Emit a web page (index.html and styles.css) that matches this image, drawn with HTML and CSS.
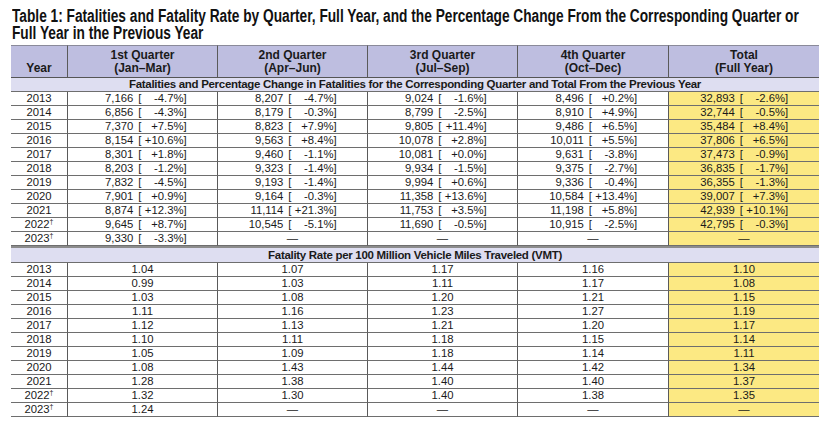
FILE: index.html
```html
<!DOCTYPE html>
<html lang="en">
<head>
<meta charset="utf-8">
<title>Table 1: Fatalities and Fatality Rate</title>
<link rel="stylesheet" href="styles.css">
</head>
<body>
<div class="page">
  <h1 class="title"><span class="title-text">Table 1: Fatalities and Fatality Rate by Quarter, Full Year, and the Percentage Change From the Corresponding Quarter or<br>Full Year in the Previous Year</span></h1>
  <table class="tbl">
    <colgroup>
      <col class="c-year"><col class="c-q"><col class="c-q"><col class="c-q"><col class="c-q4"><col class="c-q">
    </colgroup>
    <thead>
      <tr class="head">
        <th class="year-h"><br>Year</th>
        <th>1st Quarter<br>(Jan–Mar)</th>
        <th>2nd Quarter<br>(Apr–Jun)</th>
        <th>3rd Quarter<br>(Jul–Sep)</th>
        <th>4th Quarter<br>(Oct–Dec)</th>
        <th class="last">Total<br>(Full Year)</th>
      </tr>
    </thead>
    <tbody>
      <tr class="section"><td colspan="6">Fatalities and Percentage Change in Fatalities for the Corresponding Quarter and Total From the Previous Year</td></tr>
      <tr><td>2013</td><td><span class="n">7,166</span><span class="p">[<i>-4.7%</i>]</span></td><td><span class="n">8,207</span><span class="p">[<i>-4.7%</i>]</span></td><td><span class="n">9,024</span><span class="p">[<i>-1.6%</i>]</span></td><td><span class="n">8,496</span><span class="p">[<i>+0.2%</i>]</span></td><td class="tot"><span class="n">32,893</span><span class="p">[<i>-2.6%</i>]</span></td></tr>
      <tr><td>2014</td><td><span class="n">6,856</span><span class="p">[<i>-4.3%</i>]</span></td><td><span class="n">8,179</span><span class="p">[<i>-0.3%</i>]</span></td><td><span class="n">8,799</span><span class="p">[<i>-2.5%</i>]</span></td><td><span class="n">8,910</span><span class="p">[<i>+4.9%</i>]</span></td><td class="tot"><span class="n">32,744</span><span class="p">[<i>-0.5%</i>]</span></td></tr>
      <tr><td>2015</td><td><span class="n">7,370</span><span class="p">[<i>+7.5%</i>]</span></td><td><span class="n">8,823</span><span class="p">[<i>+7.9%</i>]</span></td><td><span class="n">9,805</span><span class="p">[<i>+11.4%</i>]</span></td><td><span class="n">9,486</span><span class="p">[<i>+6.5%</i>]</span></td><td class="tot"><span class="n">35,484</span><span class="p">[<i>+8.4%</i>]</span></td></tr>
      <tr><td>2016</td><td><span class="n">8,154</span><span class="p">[<i>+10.6%</i>]</span></td><td><span class="n">9,563</span><span class="p">[<i>+8.4%</i>]</span></td><td><span class="n">10,078</span><span class="p">[<i>+2.8%</i>]</span></td><td><span class="n">10,011</span><span class="p">[<i>+5.5%</i>]</span></td><td class="tot"><span class="n">37,806</span><span class="p">[<i>+6.5%</i>]</span></td></tr>
      <tr><td>2017</td><td><span class="n">8,301</span><span class="p">[<i>+1.8%</i>]</span></td><td><span class="n">9,460</span><span class="p">[<i>-1.1%</i>]</span></td><td><span class="n">10,081</span><span class="p">[<i>+0.0%</i>]</span></td><td><span class="n">9,631</span><span class="p">[<i>-3.8%</i>]</span></td><td class="tot"><span class="n">37,473</span><span class="p">[<i>-0.9%</i>]</span></td></tr>
      <tr><td>2018</td><td><span class="n">8,203</span><span class="p">[<i>-1.2%</i>]</span></td><td><span class="n">9,323</span><span class="p">[<i>-1.4%</i>]</span></td><td><span class="n">9,934</span><span class="p">[<i>-1.5%</i>]</span></td><td><span class="n">9,375</span><span class="p">[<i>-2.7%</i>]</span></td><td class="tot"><span class="n">36,835</span><span class="p">[<i>-1.7%</i>]</span></td></tr>
      <tr><td>2019</td><td><span class="n">7,832</span><span class="p">[<i>-4.5%</i>]</span></td><td><span class="n">9,193</span><span class="p">[<i>-1.4%</i>]</span></td><td><span class="n">9,994</span><span class="p">[<i>+0.6%</i>]</span></td><td><span class="n">9,336</span><span class="p">[<i>-0.4%</i>]</span></td><td class="tot"><span class="n">36,355</span><span class="p">[<i>-1.3%</i>]</span></td></tr>
      <tr><td>2020</td><td><span class="n">7,901</span><span class="p">[<i>+0.9%</i>]</span></td><td><span class="n">9,164</span><span class="p">[<i>-0.3%</i>]</span></td><td><span class="n">11,358</span><span class="p">[<i>+13.6%</i>]</span></td><td><span class="n">10,584</span><span class="p">[<i>+13.4%</i>]</span></td><td class="tot"><span class="n">39,007</span><span class="p">[<i>+7.3%</i>]</span></td></tr>
      <tr><td>2021</td><td><span class="n">8,874</span><span class="p">[<i>+12.3%</i>]</span></td><td><span class="n">11,114</span><span class="p">[<i>+21.3%</i>]</span></td><td><span class="n">11,753</span><span class="p">[<i>+3.5%</i>]</span></td><td><span class="n">11,198</span><span class="p">[<i>+5.8%</i>]</span></td><td class="tot"><span class="n">42,939</span><span class="p">[<i>+10.1%</i>]</span></td></tr>
      <tr><td>2022<sup>†</sup></td><td><span class="n">9,645</span><span class="p">[<i>+8.7%</i>]</span></td><td><span class="n">10,545</span><span class="p">[<i>-5.1%</i>]</span></td><td><span class="n">11,690</span><span class="p">[<i>-0.5%</i>]</span></td><td><span class="n">10,915</span><span class="p">[<i>-2.5%</i>]</span></td><td class="tot"><span class="n">42,795</span><span class="p">[<i>-0.3%</i>]</span></td></tr>
      <tr><td>2023<sup>†</sup></td><td><span class="n">9,330</span><span class="p">[<i>-3.3%</i>]</span></td><td>—</td><td>—</td><td>—</td><td class="tot">—</td></tr>
      <tr class="section sec2"><td colspan="6">Fatality Rate per 100 Million Vehicle Miles Traveled (VMT)</td></tr>
      <tr><td>2013</td><td>1.04</td><td>1.07</td><td>1.17</td><td>1.16</td><td class="tot">1.10</td></tr>
      <tr><td>2014</td><td>0.99</td><td>1.03</td><td>1.11</td><td>1.17</td><td class="tot">1.08</td></tr>
      <tr><td>2015</td><td>1.03</td><td>1.08</td><td>1.20</td><td>1.21</td><td class="tot">1.15</td></tr>
      <tr><td>2016</td><td>1.11</td><td>1.16</td><td>1.23</td><td>1.27</td><td class="tot">1.19</td></tr>
      <tr><td>2017</td><td>1.12</td><td>1.13</td><td>1.21</td><td>1.20</td><td class="tot">1.17</td></tr>
      <tr><td>2018</td><td>1.10</td><td>1.11</td><td>1.18</td><td>1.15</td><td class="tot">1.14</td></tr>
      <tr><td>2019</td><td>1.05</td><td>1.09</td><td>1.18</td><td>1.14</td><td class="tot">1.11</td></tr>
      <tr><td>2020</td><td>1.08</td><td>1.43</td><td>1.44</td><td>1.42</td><td class="tot">1.34</td></tr>
      <tr><td>2021</td><td>1.28</td><td>1.38</td><td>1.40</td><td>1.40</td><td class="tot">1.37</td></tr>
      <tr><td>2022<sup>†</sup></td><td>1.32</td><td>1.30</td><td>1.40</td><td>1.38</td><td class="tot">1.35</td></tr>
      <tr><td>2023<sup>†</sup></td><td>1.24</td><td>—</td><td>—</td><td>—</td><td class="tot">—</td></tr>
    </tbody>
  </table>
</div>
</body>
</html>
```
FILE: styles.css
```css
html, body {
  margin: 0;
  padding: 0;
  background: #ffffff;
}

.page {
  padding: 8px 12px 0 11px;
  color: #111;
}

.title {
  margin: 0 0 3px 1px;
  overflow: hidden;
  font-family: "Liberation Sans", Arial, sans-serif;
  font-weight: bold;
  font-size: 17.5px;
  line-height: 17px;
  color: #111;
}

.title-text {
  display: inline-block;
  white-space: nowrap;
  transform: scaleX(0.783);
  transform-origin: 0 0;
}

.tbl {
  width: 808px;
  table-layout: fixed;
  border-collapse: separate;
  border-spacing: 0;
  font-family: "Liberation Sans", Arial, sans-serif;
  font-size: 11.3px;
  color: #1a1a1a;
}

.c-year { width: 57px; }
.c-q { width: 150px; }
.c-q4 { width: 151px; }

.tbl th,
.tbl td {
  padding: 0;
  text-align: center;
  line-height: 13px;
  white-space: nowrap;
  border-bottom: 1px solid #6e6e6e;
  border-right: 1px solid #5a5a5a;
}

.tbl th:last-child,
.tbl td:last-child {
  border-right: none;
}

.head th {
  background: #bebee0;
  font-weight: bold;
  font-size: 12px;
  padding: 3px 0 2px;
  border-top: 1px solid #8a8a9a;
  border-bottom-color: #555;
}

.section td {
  background: #dedef1;
  font-weight: bold;
  font-size: 11.5px;
  letter-spacing: -0.3px;
  border-right: none;
}

.sec2 td {
  border-top: 2px solid #8c8c8c;
  line-height: 14px;
}

.tot {
  background: #fce983;
}

.n {
  display: inline-block;
  width: 35px;
  text-align: right;
}

.p {
  display: inline-block;
  margin-left: 5px;
}

.p i {
  display: inline-block;
  width: 42px;
  text-align: right;
  font-style: normal;
}

sup {
  font-size: 7px;
  line-height: 0;
  vertical-align: 4px;
}
```
